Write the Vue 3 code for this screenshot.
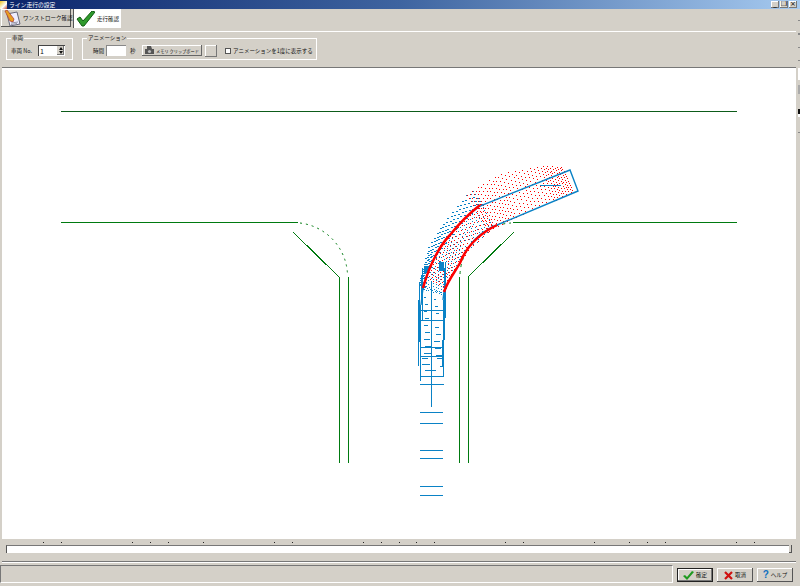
<script setup>
import { computed } from 'vue'

const ticks = [43,61,132,150,168,203,274,292,363,381,399,416,434,505,523,594,629,647,665,736,754]

const edgeMarks = [
  { top: 20, h: 1, c: '#888' }, { top: 33, h: 2, c: '#888' }, { top: 47, h: 1, c: '#888' },
  { top: 60, h: 1, c: '#888' }, { top: 68, h: 12, c: '#fff' }, { top: 85, h: 9, c: '#aaa' },
  { top: 109, h: 5, c: '#111' }, { top: 114, h: 3, c: '#fff' }, { top: 132, h: 1, c: '#888' }
]

const env = [[418,355],[418,320],[418,300],[420,277],[428,248],[443,223],[468,193],[500,174],[540,166],[566,167]]
const mid = [[421,355],[421,320],[421,300],[424,284],[434,258],[452,233],[478,206],[505,192],[545,180],[570,170]]
const inner = [[443,355],[443,320],[443,300],[444,292],[452,272],[468,250],[490,230],[515,217],[553,201],[578,190]]

function at(line, t) {
  const n = line.length - 1
  const p = Math.min(t * n, n - 0.0001)
  const i = Math.floor(p)
  const f = p - i
  return [line[i][0] + (line[i + 1][0] - line[i][0]) * f, line[i][1] + (line[i + 1][1] - line[i][1]) * f]
}

function dots(a, b, from, to, rows, cols, w) {
  let d = ''
  for (let r = 0; r <= rows; r++) {
    const t = from + (to - from) * (r / rows)
    const p = at(a, t)
    const q = at(b, t)
    for (let c = 0; c <= cols; c++) {
      const s = (c + (r % 2) * 0.5) / cols
      if (s > 1) continue
      const x = Math.round(p[0] + (q[0] - p[0]) * s)
      const y = Math.round(p[1] + (q[1] - p[1]) * s)
      d += `M${x} ${y}h${w}v1h-${w}z`
    }
  }
  return d
}

const blueDots = computed(() =>
  dots(env, mid, 0.3, 0.68, 36, 4, 2) + dots(mid, inner, 0.3, 0.68, 28, 8, 1)
)
const redDots = computed(() =>
  dots(env, inner, 0.66, 0.98, 32, 11, 1) + dots(mid, inner, 0.36, 0.68, 26, 6, 1)
)
const blueDashes = computed(() => {
  let d = ''
  for (let i = 0; i < 9; i++) {
    const y = 297 + i * 7
    const w = 2 + Math.round(i * 0.6)
    d += `M${424 + (i % 2)} ${y}h${w}v1h-${w}zM${434 + (i % 3)} ${y + 2}h${w}v1h-${w}z`
  }
  return d
})
</script>

<template>
  <div class="window">
    <header class="titlebar">
      <span class="title-icon"></span>
      <span class="title-text">ライン走行の設定</span>
      <div class="win-btns">
        <span class="win-btn">_</span><span class="win-btn">❐</span><span class="win-btn">×</span>
      </div>
    </header>

    <nav class="tabs">
      <button class="tab tab-raised">
        <svg class="tab-icon" width="18" height="17" viewBox="0 0 18 17">
          <path d="M4 4l10-2 3 12-10 2z" fill="#eef" stroke="#667" stroke-width="1"/>
          <path d="M2 1l2-1 7 9-1 3-3-1z" fill="#e8a020" stroke="#a33" stroke-width=".7"/>
          <path d="M8 13l7-1M8 14.500l6-1" stroke="#99a" stroke-width="1"/>
        </svg>
        <span>ワンストローク確認</span>
      </button>
      <button class="tab tab-active">
        <svg class="tab-icon" width="19" height="16" viewBox="0 0 19 16">
          <path d="M1 8l3-2 3 4 9-10 3 1-11 14h-2z" fill="#2f9a2c" stroke="#125c12" stroke-width="1"/>
        </svg>
        <span>走行確認</span>
      </button>
    </nav>

    <div class="options">
      <fieldset class="group group-car">
        <legend>車両</legend>
        <label class="lbl lbl-car">車両 No.</label>
        <div class="spin">
          <span class="spin-val">1</span>
          <span class="spin-arrows"><i class="arrow-up"></i><i class="arrow-down"></i></span>
        </div>
      </fieldset>
      <fieldset class="group group-anim">
        <legend>アニメーション</legend>
        <label class="lbl lbl-time">時間</label>
        <div class="time-input"></div>
        <span class="lbl sec">秒</span>
        <button class="btn-clip">
          <svg class="clip-icon" width="9" height="9" viewBox="0 0 9 9"><path d="M2 0h4l1 3h2v5H0V3h2z" fill="#555"/><circle cx="4.500" cy="5.500" r="1.600" fill="#bbb"/></svg>
          <span>メモリ クリップボード</span>
        </button>
        <button class="btn-blank"></button>
        <span class="check"></span>
        <span class="lbl">アニメーションを1度に表示する</span>
      </fieldset>
    </div>

    <main class="canvas-frame">
      <svg class="canvas" width="794" height="471" viewBox="2 68 794 471" shape-rendering="crispEdges">
        <g fill="none" stroke="#007a10" stroke-width="1">
          <path d="M61 111.500H737" stroke="#0d5c1a"/>
          <path d="M61 222.500H298M513 222.500H737"/>
          <path d="M339.500 277V463M348.500 277V463M459.500 277V463M468.500 277V463"/>
          <path d="M293 232L339 277M468 277L514 232"/>
          <path d="M300 223A54 54 0 0 1 347.500 274" stroke-dasharray="2 4" shape-rendering="auto"/>
          <path d="M460 274A54 54 0 0 1 511 223" stroke-dasharray="3 4" shape-rendering="auto"/>
        </g>
        <path :d="blueDots" fill="#0a82c6"/>
        <path :d="redDots" fill="#f00"/>
        <path :d="blueDashes" fill="#0a82c6"/>
        <g fill="none" stroke="#0a82c6">
          <path d="M421 305L423 288C430 262 442 243 450 235C458 225 466 216 480 206L570 170 578 191 490 228C475 236 465 250 460 263C455 272 448 280 444 292L443 300" stroke-width="1.400" shape-rendering="auto"/>
          <path d="M420.500 381V305M443.500 300V376.500H421" stroke-width="1"/>
          <path d="M431.500 282V407" />
          <path d="M420 310.500H443M420 320.500H443M420 347.500H443M420 356.500H443"/>
          <path d="M420 384.500H444" />
          <path d="M422 358.500H428M437 358.500H442M422 364.500H430M440 366.500H443M425 370.500H436"/>
          <path d="M420 412.500H443M420 423.500H443M420 450.500H443M420 458.500H443M420 486.500H443M420 495.500H443"/>
          <path d="M540 185.500H561"/>
          <path d="M418.500 366V300M419.500 342V282M422.500 320V268M421.500 300V276" stroke-width="1"/>
          <path d="M444.500 340V268M445.500 318V262M442.500 366V340" stroke-width="1"/>
          <path d="M424 266H428V272H424zM439 262H443V270H439z" fill="#0a82c6"/>
        </g>
        <g fill="none" stroke="#f00" stroke-width="2.500" shape-rendering="auto">
          <path d="M423 288C430 262 442 243 450 235C458 225 466 216 480 205" />
          <path d="M444 292C448 280 455 272 460 263C465 250 475 236 497 225"/>
        </g>
      </svg>
    </main>

    <div class="ticks">
      <i v-for="t in ticks" :key="t" class="tick" :style="{ left: t + 'px' }"></i>
    </div>
    <div class="track-row">
      <div class="track"><span class="thumb"></span></div>
    </div>

    <footer class="footer">
      <div class="status"></div>
      <div class="actions">
        <button class="act act-default">
          <svg width="11" height="9" viewBox="0 0 11 9"><path d="M0 5l2-1 2 2 5-6 2 1-7 8z" fill="#1f9a1f"/></svg><span>確定</span>
        </button>
        <button class="act">
          <svg width="9" height="9" viewBox="0 0 9 9"><path d="M1 1l7 7M8 1L1 8" stroke="#d01010" stroke-width="2.200"/></svg><span>取消</span>
        </button>
        <button class="act">
          <span class="q">?</span><span>ヘルプ</span>
        </button>
      </div>
    </footer>

    <div class="edge">
      <i v-for="m in edgeMarks" :key="m.top" class="edge-mark" :style="{ top: m.top + 'px', height: m.h + 'px', background: m.c }"></i>
    </div>
  </div>
</template>

<style>
html, body { margin: 0; padding: 0; background: #d4d0c8; }
</style>

<style scoped>
.window {
  position: relative;
  width: 800px;
  height: 586px;
  overflow: hidden;
  background: #d4d0c8;
  font-family: "Noto Sans CJK JP", "Liberation Sans", sans-serif;
  font-size: 5.500px;
  color: #111;
  display: flex;
  flex-direction: column;
}
.titlebar {
  height: 9px;
  flex: none;
  display: flex;
  align-items: center;
  background: linear-gradient(90deg, #0a246a 0%, #3e64a0 50%, #a6caf0 100%);
  color: #fff;
  font-size: 5.800px;
  line-height: 9px;
}
.title-icon { width: 7px; height: 8px; margin: 0 2px 0 0; background: linear-gradient(135deg, #f0c020, #fff 60%, #c04020); }
.title-text { white-space: nowrap; }
.win-btns { margin-left: auto; margin-right: 3px; display: flex; gap: 1px; }
.win-btn {
  width: 8px; height: 7px; background: #d4d0c8; color: #000; font-size: 7px; line-height: 7px; text-align: center;
  box-shadow: inset -1px -1px #777, inset 1px 1px #fff; font-family: "DejaVu Sans", sans-serif; overflow: hidden;
}
.tabs {
  height: 20px;
  flex: none;
  display: flex;
  gap: 2px;
  padding: 0 0 0 1px;
  box-sizing: border-box;
}
.tab {
  height: 18px; padding: 0 0 0 2px; margin: 0; border: 0; display: flex; align-items: center; gap: 2px;
  font: inherit; color: #111; background: #d4d0c8; white-space: nowrap;
}
.tab-icon { flex: none; }
.tab-raised { width: 70px; box-shadow: inset -1px -1px #555, inset 1px 1px #fff; }
.tab-active { width: 48px; height: 19px; background: #fff; border-left: 1px solid #555; }
.options {
  height: 36px;
  flex: none;
  margin-top: 2px;
  border-top: 1px solid #fff;
  width: 796px;
  box-sizing: border-box;
  display: flex;
  gap: 9px;
  padding: 2px 0 0 6px;
}
.group {
  margin: 0; padding: 0 0 0 4px; height: 26px; box-sizing: border-box; border: 1px solid #fff;
  display: flex; align-items: center; gap: 2px; min-width: 0;
}
.group legend { padding: 0 1px; margin-left: 0; font-size: 5.500px; line-height: 8px; white-space: nowrap; }
.group-car { width: 67px; }
.group-anim { width: 235px; }
.lbl { white-space: nowrap; font-size: 5.500px; flex: none; }
.lbl-car { width: 25px; }
.lbl-time { width: 17px; text-align: right; }
.spin { width: 27px; height: 11px; background: #fff; box-shadow: inset 1px 1px #444; display: flex; justify-content: space-between; align-items: center; font-size: 7px; }
.spin-val { padding-left: 2px; line-height: 10px; }
.spin-arrows { width: 7px; height: 9px; background: #d4d0c8; display: flex; flex-direction: column; align-items: center; justify-content: center; gap: 1px; margin-right: 1px; box-shadow: inset -1px -1px #777; }
.arrow-up { width: 0; height: 0; border: 2px solid transparent; border-top: 0; border-bottom: 3px solid #111; }
.arrow-down { width: 0; height: 0; border: 2px solid transparent; border-bottom: 0; border-top: 3px solid #111; }
.time-input { width: 20px; height: 11px; background: #fff; box-shadow: inset 1px 1px #888; flex: none; }
.sec { margin: 0 4.500px 0 2px; }
.btn-clip {
  width: 60px; height: 11px; padding: 0 0 0 3px; border: 0; background: #d4d0c8; font: inherit; font-size: 4.200px; color: #111;
  box-shadow: inset -1px -1px #666, inset 1px 1px #fff; display: flex; align-items: center; gap: 2px; white-space: nowrap; overflow: hidden; flex: none;
}
.clip-icon { flex: none; }
.btn-blank { width: 12px; height: 12px; padding: 0; border: 0; margin-left: 1px; background: #d4d0c8; box-shadow: inset -1px -1px #777, inset 1px 1px #fff; flex: none; }
.check { width: 4px; height: 4px; background: #fff; border: 1px solid #555; margin: 0 0 0 6px; flex: none; }
.canvas-frame {
  height: 472px;
  flex: none;
  margin-left: 2px;
  width: 794px;
  background: #fff;
  border-top: 1px solid #777;
  box-sizing: border-box;
}
.canvas { display: block; background: #fff; }
.ticks { position: relative; height: 5px; flex: none; }
.tick { position: absolute; top: 3px; width: 1px; height: 1px; background: #222; }
.track-row { height: 8px; flex: none; padding: 1px 0 0 6px; }
.track { position: relative; width: 786px; height: 8px; background: #fff; border-top: 1px solid #777; border-left: 1px solid #555; box-sizing: border-box; }
.thumb { position: absolute; right: 0; top: -1px; width: 3px; height: 8px; background: #d4d0c8; box-shadow: inset -1px -1px #555; }
.footer {
  margin-top: 8px;
  flex: 1;
  border-top: 1px solid #777;
  box-shadow: inset 0 1px #fff;
  display: flex;
  padding-top: 3px;
  gap: 4px;
  margin-left: 2px;
  width: 794px;
}
.status { width: 673px; margin-left: -2px; height: 18px; border: 1px solid; border-color: #777 #fff #fff #777; box-sizing: border-box; flex: none; }
.actions { display: flex; gap: 4px; padding-top: 3px; }
.act {
  width: 36px; height: 14px; padding: 0; border: 0; background: #d4d0c8; font: inherit; font-size: 5.500px; color: #111;
  display: flex; align-items: center; justify-content: center; gap: 2px; white-space: nowrap;
  box-shadow: inset -1px -1px #555, inset 1px 1px #fff;
}
.act-default { box-shadow: inset 0 0 0 1px #222, inset -2px -2px #777, inset 2px 2px #fff; }
.q { color: #1070c0; font-weight: 700; font-size: 10px; line-height: 10px; font-family: "Liberation Sans", sans-serif; }
.edge { position: absolute; top: 0; right: 0; width: 2px; height: 140px; }
.edge-mark { position: absolute; left: 0; width: 2px; }
</style>
